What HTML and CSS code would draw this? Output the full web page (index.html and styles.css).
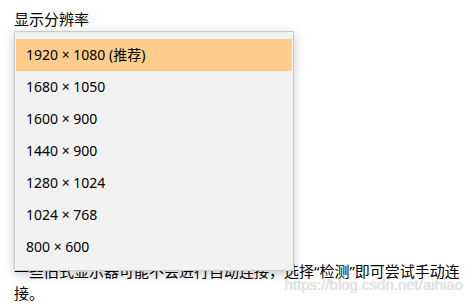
FILE: index.html
```html
<!DOCTYPE html>
<html lang="zh-CN">
<head>
    <meta charset="UTF-8">
    <title>显示分辨率</title>
    <link rel="stylesheet" href="styles.css">
</head>
<body>
    <div class="page">
        <div class="label">显示分辨率</div>

        <!-- 下拉框本体，被弹出列表盖住 -->
        <div class="combo">1920 × 1080 (推荐)</div>

        <p class="hint">一些旧式显示器可能不会进行自动连接，选择“检测”即可尝试手动连接。</p>

        <!-- 弹出的分辨率列表 -->
        <ul class="popup">
            <li class="item selected">1920 × 1080 (推荐)</li>
            <li class="item">1680 × 1050</li>
            <li class="item">1600 × 900</li>
            <li class="item">1440 × 900</li>
            <li class="item">1280 × 1024</li>
            <li class="item">1024 × 768</li>
            <li class="item">800 × 600</li>
        </ul>

        <div class="watermark">https://blog.csdn.net/aihiao</div>
    </div>
</body>
</html>
```

FILE: styles.css
```css
body {
    margin: 0;
    background-color: #fff;
    color: #000;
    font-family: 'Noto Sans', 'Noto Sans CJK SC', sans-serif;
}
.page {
    position: relative;
    height: 305px;
    padding: 9px 14px 0;
    overflow: hidden;
}
.label {
    font-size: 15px;
    line-height: 20px;
}
.combo {
    width: 262px;
    height: 30px;
    margin-top: 8px;
    padding: 0 8px;
    border: 1px solid #999;
    font-size: 14px;
    line-height: 30px;
}
.hint {
    width: 450px;
    margin: 191px 0 0;
    font-size: 15px;
    line-height: 22px;
}
.popup {
    position: absolute;
    top: 31px;
    left: 14px;
    width: 278px;
    margin: 0;
    padding: 7px 0;
    list-style: none;
    background-color: #f2f2f2;
    border: 1px solid #cbcbcb;
    box-shadow: 0 3px 10px rgba(0, 0, 0, 0.22);
}
.item {
    height: 32px;
    margin: 0 1px;
    padding-left: 10px;
    font-size: 14px;
    line-height: 31px;
}
.item.selected {
    background-color: #fecd8b;
}
.watermark {
    position: absolute;
    top: 276px;
    right: 10px;
    font-family: 'Liberation Sans', sans-serif;
    font-size: 15px;
    color: #e4e4e4;
    text-shadow: 0 0 1px #d0d0d0;
}
```
